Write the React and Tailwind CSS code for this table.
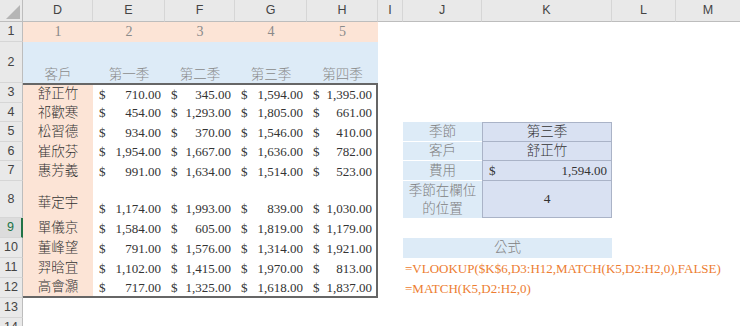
import React from "react";

const serif = "font-['Liberation_Serif','Noto_Sans_CJK_TC',serif]";

function Hdr({ children, last }) {
  return (
    <div
      className={`bg-[#e9e9e9] border-b border-[#bdbdbd] ${last ? "" : "border-r border-r-[#d6d6d6]"} flex items-center justify-center text-[12.5px] text-[#444] font-['Liberation_Sans',sans-serif]`}
    >
      {children}
    </div>
  );
}

function RowNum({ n, selected }) {
  return (
    <div
      className={`${selected ? "bg-[#dcdcdc] text-[#217346] border-r-2 border-r-[#217346]" : "bg-[#e9e9e9] text-[#444] border-r border-r-[#bdbdbd]"} border-b border-b-[#d6d6d6] flex items-center justify-center text-[12.5px] font-['Liberation_Sans',sans-serif]`}
    >
      {n}
    </div>
  );
}

const data = [
  ["舒正竹", "710.00", "345.00", "1,594.00", "1,395.00"],
  ["祁歡寒", "454.00", "1,293.00", "1,805.00", "661.00"],
  ["松習德", "934.00", "370.00", "1,546.00", "410.00"],
  ["崔欣芬", "1,954.00", "1,667.00", "1,636.00", "782.00"],
  ["惠芳義", "991.00", "1,634.00", "1,514.00", "523.00"],
  ["華定宇", "1,174.00", "1,993.00", "839.00", "1,030.00"],
  ["單儀京", "1,584.00", "605.00", "1,819.00", "1,179.00"],
  ["董峰望", "791.00", "1,576.00", "1,314.00", "1,921.00"],
  ["羿晗宜", "1,102.00", "1,415.00", "1,970.00", "813.00"],
  ["高會灝", "717.00", "1,325.00", "1,618.00", "1,837.00"],
];

function Money({ v, top, bottom, right, tall }) {
  return (
    <div
      className={`flex ${tall ? "items-end pb-[3px]" : "items-center"} justify-between pl-[6px] pr-[4px] text-[13px] leading-none text-[#333] ${serif} ${top ? "border-t-2 border-t-[#666]" : ""} ${bottom ? "border-b-2 border-b-[#666]" : ""} ${right ? "border-r-2 border-r-[#666]" : ""}`}
    >
      <span>$</span>
      <span>{v}</span>
    </div>
  );
}

function RightCells({ r }) {
  const j = "bg-[#ddebf7] text-[#808080] flex items-center justify-center text-[13.5px] font-light leading-none border-b border-b-white " + serif;
  const k = "bg-[#d9e1f2] text-[#333] border-l border-r border-b border-[#aab3c7] flex items-center justify-center text-[13.5px] font-light leading-none " + serif;
  if (r === 5)
    return (
      <>
        <div className={j}>季節</div>
        <div className={k + " border-t"}>第三季</div>
      </>
    );
  if (r === 6)
    return (
      <>
        <div className={j}>客戶</div>
        <div className={k}>舒正竹</div>
      </>
    );
  if (r === 7)
    return (
      <>
        <div className={j}>費用</div>
        <div className={"bg-[#d9e1f2] text-[#333] border-l border-r border-b border-[#aab3c7] flex items-center justify-between pl-[6px] pr-[4px] text-[13px] leading-none " + serif}>
          <span>$</span>
          <span>1,594.00</span>
        </div>
      </>
    );
  if (r === 8)
    return (
      <>
        <div className={"bg-[#ddebf7] text-[#808080] flex flex-col items-center justify-center text-[13.5px] font-light leading-[18px] " + serif}>
          <span>季節在欄位</span>
          <span>的位置</span>
        </div>
        <div className={k}>4</div>
      </>
    );
  if (r === 10)
    return (
      <div className={"col-span-2 bg-[#ddebf7] text-[#808080] flex items-center justify-center text-[13.5px] font-light leading-none " + serif}>
        公式
      </div>
    );
  if (r === 11)
    return (
      <>
        <div className={"flex items-center pl-[2px] whitespace-nowrap overflow-visible text-[13px] leading-none text-[#ed7d31] " + serif}>
          =VLOOKUP($K$6,D3:H12,MATCH(K5,D2:H2,0),FALSE)
        </div>
        <div />
      </>
    );
  if (r === 12)
    return (
      <>
        <div className={"flex items-center pl-[2px] whitespace-nowrap overflow-visible text-[13px] leading-none text-[#ed7d31] " + serif}>
          =MATCH(K5,D2:H2,0)
        </div>
        <div />
      </>
    );
  return (
    <>
      <div />
      <div />
    </>
  );
}

export default function App() {
  const quarters = ["第一季", "第二季", "第三季", "第四季"];
  return (
    <div className="w-[740px] h-[326px] overflow-hidden bg-white">
      <div className="grid grid-cols-[23px_70px_72px_70px_72px_71px_25px_79px_130px_64px_64px] grid-rows-[22px_20px_41px_20px_19px_20px_19px_20px_37px_20px_20px_20px_20px_20px_20px]">
        <div className="bg-[#e9e9e9] border-b border-[#bdbdbd] border-r border-r-[#bdbdbd] relative">
          <svg width="23" height="22" className="absolute left-0 top-0">
            <polygon points="20,5 20,19 6,19" fill="#b5b5b5" />
          </svg>
        </div>
        {["D", "E", "F", "G", "H", "I", "J", "K", "L", "M"].map((c, i) => (
          <Hdr key={c} last={i === 9}>
            {c}
          </Hdr>
        ))}

        <RowNum n={1} />
        {[1, 2, 3, 4, 5].map((n) => (
          <div key={n} className={`bg-[#fce4d6] flex items-center justify-center text-[14px] leading-none text-[#8a8a8a] ${serif}`}>
            {n}
          </div>
        ))}
        <div /><div /><div /><div /><div />

        <RowNum n={2} />
        {["客戶", ...quarters].map((t) => (
          <div key={t} className={`bg-[#ddebf7] flex items-end justify-center pb-[2px] text-[13.5px] font-light leading-none text-[#8a8a8a] ${serif}`}>
            {t}
          </div>
        ))}
        <div /><div /><div /><div /><div />

        {data.map((row, idx) => {
          const r = idx + 3;
          const top = r === 3;
          const bottom = r === 12;
          const tall = r === 8;
          return (
            <React.Fragment key={r}>
              <RowNum n={r} selected={r === 9} />
              <div
                className={`bg-[#fce4d6] flex ${tall ? "items-end pb-[9px]" : "items-center"} justify-center text-[13.5px] font-light leading-none text-[#333] ${serif} ${top ? "border-t-2 border-t-[#666]" : ""} ${bottom ? "border-b-2 border-b-[#666]" : ""}`}
              >
                {row[0]}
              </div>
              {row.slice(1).map((v, i) => (
                <Money key={i} v={v} top={top} bottom={bottom} right={i === 3} tall={tall} />
              ))}
              <div />
              <RightCells r={r} />
              <div />
              <div />
            </React.Fragment>
          );
        })}

        <RowNum n={13} />
        <div className="col-span-10" />
        <RowNum n={14} />
        <div className="col-span-10" />
      </div>
    </div>
  );
}
